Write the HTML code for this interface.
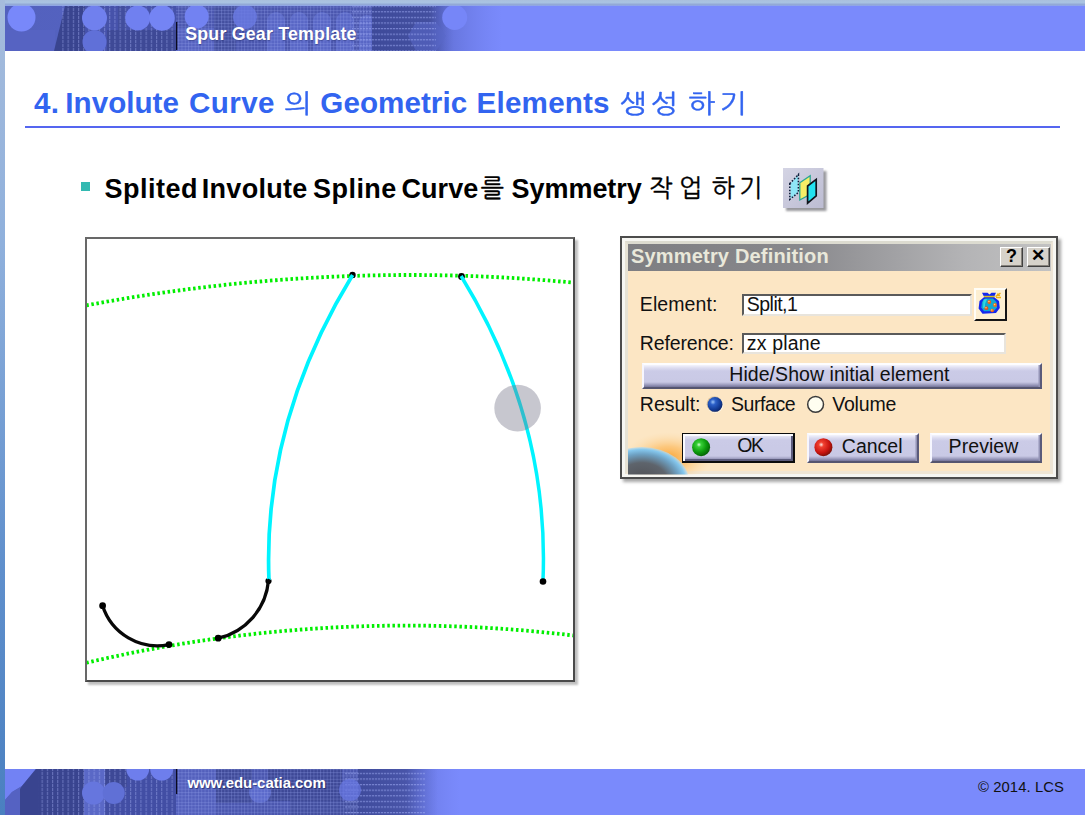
<!DOCTYPE html>
<html lang="ko">
<head>
<meta charset="utf-8">
<title>Spur Gear Template</title>
<style>
*{margin:0;padding:0;box-sizing:border-box}
html,body{width:1085px;height:815px;overflow:hidden;background:#fff}
body{position:relative;font-family:"Liberation Sans","NanumGothic",sans-serif;color:#000}
.abs{position:absolute}
#topstrip{left:0;top:0;width:1085px;height:6px;background:linear-gradient(#a9bfdc 0,#aac4e2 40%,#93a9d6 75%,#8fa4ec 100%)}
#leftstrip{left:0;top:0;width:5px;height:815px;background:linear-gradient(#a6bcdc 0,#8fb0dc 30%,#5f8fcc 70%,#4a80c0 100%)}
#hdrtxt{text-shadow:0.5px 0.5px 1px rgba(10,15,70,0.35);left:185.2px;top:23.5px;font-weight:bold;font-size:17.8px;letter-spacing:0.21px;line-height:20px;color:#fff;white-space:nowrap}
#ftrtxt{text-shadow:1px 1px 1px rgba(10,15,70,0.55);left:187.4px;top:772.9px;font-weight:bold;font-size:15px;letter-spacing:-0.07px;line-height:20px;color:#fff;white-space:nowrap}
#copy{left:978px;top:776.5px;font-size:14.8px;letter-spacing:0.1px;line-height:20px;color:#111;white-space:nowrap}
.tw{top:83.2px;font-weight:bold;font-size:29.6px;line-height:40px;color:#3264f0;white-space:nowrap}
.tw.k{top:84px;font-weight:normal;font-size:29px;transform:scaleY(0.9);-webkit-text-stroke:0.45px #3264f0}
#rule{left:25px;top:126px;width:1035px;height:2px;background:#5566f0}
#bul{left:81px;top:182px;width:9px;height:9px;background:#33b9b1}
.bw{top:168.6px;font-weight:bold;font-size:27px;line-height:40px;white-space:nowrap}
.bw.k{top:167.8px;margin-left:-0.5px;font-weight:normal;font-size:25px;-webkit-text-stroke:0.35px #000}
#box{left:85px;top:237px;width:490px;height:445px;border:2px solid #5a5a5a;border-top-color:#686868;border-left-color:#686868;border-right-color:#4a4a4a;border-bottom-color:#4a4a4a;background:#fff;box-shadow:2.5px 2.5px 2px rgba(0,0,0,0.25)}

#dlg{left:620px;top:236px;width:438px;height:242.5px;background:#fce6c4;border:2px solid #4c4c4c;box-shadow:3px 3px 3px rgba(0,0,0,0.35);font-size:19.5px;line-height:24px;color:#111}
#dlg .fr1{position:absolute;left:0;top:0;right:0;bottom:0;border:3px solid #f6f6f2}
#dlg .fr2{position:absolute;left:3px;top:3px;right:3px;bottom:3px;border:3px solid #dcdbd0;border-bottom-color:#f0e6d4;border-left-color:#e6e2d4;border-right-color:#ece4d6}
#tbar{left:6px;top:6px;width:423px;height:26.5px;background:linear-gradient(90deg,#7e7e82 0,#88888c 40%,#b4b4b6 80%,#c2c2c2 100%)}
#ttl{left:9px;top:6.2px;font-weight:bold;font-size:20px;line-height:24px;color:#e9e8da;white-space:nowrap;letter-spacing:0.18px}
.tbtn{top:8.7px;width:23.5px;height:20px;background:#d6d2ca;border:1.5px solid;border-color:#fff #404040 #404040 #fff;box-shadow:inset -1px -1px 0 #86827c}
.tbtn span{position:absolute;left:0;right:0;top:-2px;text-align:center;font-weight:bold;font-size:18px;line-height:20px;color:#000}
.lbl{white-space:nowrap}
.fld{background:#fff;border:2px solid;border-color:#5a5a5a #e8e4dc #e8e4dc #5a5a5a;height:21.5px}
.fld span{position:absolute;left:2.8px;top:-4px;white-space:nowrap}
.cbtn{background:linear-gradient(180deg,#f4f4fc 0,#dcdcf0 3px,#cbcbe7 6px,#c9c9e5 calc(100% - 5px),#a9a9c9 calc(100% - 3px),#74749a 100%);border:2px solid;border-color:#fdfdff #5a5a7a #55556f #f6f6ff;box-shadow:inset -1.5px 0 0 #9494b6}
.cbtn span{position:absolute;white-space:nowrap}
</style>
</head>
<body>
<svg class="abs" id="hsvg" style="left:0;top:0" width="1085" height="52" viewBox="0 0 1085 52">
<defs>
<linearGradient id="hfade" x1="0" y1="0" x2="1" y2="0">
<stop offset="0" stop-color="#5361be" stop-opacity="1"/><stop offset="0.85" stop-color="#5866c6" stop-opacity="1"/><stop offset="1" stop-color="#6a79e4" stop-opacity="0"/>
</linearGradient>
<linearGradient id="hfade2" x1="0" y1="0" x2="1" y2="0">
<stop offset="0" stop-color="#3e4a9a" stop-opacity="1"/><stop offset="0.7" stop-color="#434f9f" stop-opacity="1"/><stop offset="1" stop-color="#5a68c8" stop-opacity="0"/>
</linearGradient>
<pattern id="vdots" width="5.2" height="4" patternUnits="userSpaceOnUse"><rect x="0" y="0" width="1.1" height="3.2" fill="#a4b0f4" opacity="0.42"/></pattern>
<pattern id="hdash" width="3" height="5.6" patternUnits="userSpaceOnUse"><rect x="0" y="0" width="2.2" height="1.2" fill="#a0acf6" opacity="0.55"/></pattern>
<pattern id="grid" width="3.3" height="3.3" patternUnits="userSpaceOnUse"><rect x="0" y="0" width="3.3" height="0.9" fill="#96a2ee" opacity="0.3"/><rect x="0" y="0" width="0.9" height="3.3" fill="#96a2ee" opacity="0.3"/></pattern>
<clipPath id="hclip"><rect x="5" y="6" width="1080" height="45"/></clipPath>
</defs>
<rect x="5" y="6" width="1080" height="45" fill="#7a8afc"/>
<g clip-path="url(#hclip)">
<rect x="5" y="6" width="497" height="45" fill="url(#hfade)"/>
<rect x="5" y="30" width="50" height="21" fill="#5663c2"/>
<polygon points="65,6 85,6 85,51 54,51" fill="#39448f"/>
<rect x="85" y="6" width="91" height="45" fill="#4652aa"/>
<rect x="107" y="30" width="69" height="21" fill="#3e4996"/>
<rect x="118" y="6" width="8" height="24" fill="#424e9e"/>
<rect x="62" y="6" width="114" height="45" fill="url(#vdots)"/>
<rect x="176" y="6" width="200" height="45" fill="#4a56ae"/>
<rect x="176" y="28" width="40" height="23" fill="#5663c0"/>
<rect x="214" y="6" width="22" height="45" fill="#434f9f"/>
<g fill="#6474d8" opacity="0.55">
<path d="M267,51 V21 a9,9 0 0 1 18,0 V51 Z"/><path d="M290,51 V21 a9,9 0 0 1 18,0 V51 Z"/><path d="M313,51 V21 a9,9 0 0 1 18,0 V51 Z"/><path d="M336,51 V21 a9,9 0 0 1 18,0 V51 Z"/><path d="M359,51 V23 a8,8 0 0 1 16,0 V51 Z"/>
</g>
<rect x="176" y="6" width="200" height="45" fill="url(#grid)"/>
<rect x="372" y="6" width="82" height="45" fill="url(#hfade2)"/>
<polygon points="408,36 416,22 436,22 446,36 436,51 416,51" fill="#5a68c8" opacity="0.55"/>
<rect x="352" y="6" width="84" height="45" fill="url(#hdash)"/>
<circle cx="21.5" cy="17.5" r="14" fill="#7888fa"/>
<circle cx="94.5" cy="18" r="12.5" fill="#7080ee"/>
<circle cx="94.5" cy="42" r="12" fill="#6070d8"/>
<circle cx="137.7" cy="18" r="12.5" fill="#7080f0"/>
<circle cx="162" cy="18" r="12.8" fill="#7484f4"/>
<circle cx="196.7" cy="16.5" r="12" fill="#7282f2"/>
<circle cx="245" cy="17" r="12" fill="#6a7ae4" opacity="0.8"/>
<circle cx="454.7" cy="17.5" r="12.5" fill="#7686f8"/>
</g>
<rect x="176" y="22" width="1.3" height="28" fill="#0a0a20"/>
</svg>
<svg class="abs" id="fsvg" style="left:0;top:768px" width="1085" height="47" viewBox="0 768 1085 47">
<defs>
<linearGradient id="ffade" x1="0" y1="0" x2="1" y2="0">
<stop offset="0" stop-color="#5563c2" stop-opacity="1"/><stop offset="0.84" stop-color="#5563c2" stop-opacity="1"/><stop offset="1" stop-color="#6a79e4" stop-opacity="0"/>
</linearGradient>
<linearGradient id="ffade2" x1="0" y1="0" x2="1" y2="0">
<stop offset="0" stop-color="#3f4b9c" stop-opacity="1"/><stop offset="0.6" stop-color="#4652a4" stop-opacity="0.9"/><stop offset="1" stop-color="#5a68c8" stop-opacity="0"/>
</linearGradient>
<clipPath id="fclip"><rect x="5" y="769" width="1080" height="46"/></clipPath>
</defs>
<rect x="5" y="769" width="1080" height="46" fill="#7a8afc"/>
<g clip-path="url(#fclip)">
<rect x="5" y="769" width="455" height="46" fill="url(#ffade)"/>
<polygon points="5,769 36,769 22,786 12,792 5,800" fill="#7282f4"/>
<polygon points="5,800 12,792 22,786 36,769 40,769 40,815 5,815" fill="#5562c2"/>
<polygon points="36,769 86,769 86,815 20,815 20,789 22,786" fill="#39448f"/>
<rect x="86" y="769" width="90" height="46" fill="#424ea4"/>
<rect x="84" y="769" width="21" height="46" fill="#5a68c6"/>
<rect x="105" y="769" width="22" height="18" fill="#3d4896"/>
<rect x="38" y="769" width="138" height="46" fill="url(#vdots)"/>
<rect x="176" y="769" width="190" height="46" fill="#4a56ae"/>
<rect x="176" y="769" width="40" height="46" fill="#5360bc"/>
<rect x="216" y="769" width="36" height="34" fill="#3f4a98"/>
<rect x="268" y="769" width="74" height="32" fill="#3d4896"/>
<rect x="290" y="801" width="70" height="14" fill="#424e9e"/>
<circle cx="260" cy="792" r="11" fill="#5f6fd2" opacity="0.8"/>
<rect x="176" y="769" width="190" height="46" fill="url(#grid)"/>
<rect x="358" y="769" width="80" height="46" fill="url(#ffade2)"/>
<rect x="345" y="769" width="80" height="46" fill="url(#hdash)"/>
<circle cx="93.5" cy="793" r="11.5" fill="#6676de"/>
<circle cx="113.7" cy="793" r="11" fill="#6070d6"/>
<circle cx="137.7" cy="769" r="11.5" fill="#6e7eec"/>
<circle cx="161.7" cy="769" r="11.5" fill="#6e7eec"/>
<circle cx="350" cy="790" r="11" fill="#6878e2" opacity="0.7"/>
</g>
<rect x="176" y="769" width="1.3" height="25" fill="#0a0a20"/>
</svg>
<div class="abs" id="topstrip"></div>
<div class="abs" id="leftstrip"></div>
<div class="abs" id="hdrtxt">Spur Gear Template</div>
<div class="abs" id="ftrtxt">www.edu-catia.com</div>
<div class="abs" id="copy">© 2014. LCS</div>
<span class="abs tw b" id="tw0" style="left:34.1px;letter-spacing:0.20px">4.</span>
<span class="abs tw b" id="tw1" style="left:65.3px;letter-spacing:0.03px">Involute</span>
<span class="abs tw b" id="tw2" style="left:189.0px;letter-spacing:0.42px">Curve</span>
<span class="abs tw k" id="tw3" style="left:284.3px">의</span>
<span class="abs tw b" id="tw4" style="left:320.3px;letter-spacing:0.06px">Geometric</span>
<span class="abs tw b" id="tw5" style="left:476.6px;letter-spacing:0.20px">Elements</span>
<span class="abs tw k" id="tw6" style="left:619.6px">생</span>
<span class="abs tw k" id="tw7" style="left:650.8px">성</span>
<span class="abs tw k" id="tw8" style="left:688.0px">하</span>
<span class="abs tw k" id="tw9" style="left:719.5px">기</span>
<div class="abs" id="rule"></div>
<div class="abs" id="bul"></div>
<span class="abs bw b" id="bw0" style="left:104.6px;letter-spacing:0.48px">Splited</span>
<span class="abs bw b" id="bw1" style="left:201.7px;letter-spacing:0.31px">Involute</span>
<span class="abs bw b" id="bw2" style="left:313.0px;letter-spacing:0.46px">Spline</span>
<span class="abs bw b" id="bw3" style="left:401.4px;letter-spacing:0.10px">Curve</span>
<span class="abs bw k" id="bw4" style="left:481.1px">를</span>
<span class="abs bw b" id="bw5" style="left:511.6px;letter-spacing:-0.06px">Symmetry</span>
<span class="abs bw k" id="bw6" style="left:649.8px">작</span>
<span class="abs bw k" id="bw7" style="left:679.5px">업</span>
<span class="abs bw k" id="bw8" style="left:712.0px">하</span>
<span class="abs bw k" id="bw9" style="left:739.5px">기</span>
<div class="abs" id="box"></div>
<svg class="abs" id="draw" style="left:87px;top:239px" width="486" height="441" viewBox="87 239 486 441">
<path d="M86.3,305.4 A1740.0,1740.0 0 0 1 576.0,282.9" fill="none" stroke="#00ee00" stroke-width="3.8" stroke-dasharray="2.5 2.65" stroke-dashoffset="0"/>
<path d="M86.3,662.8 A1400.0,1400.0 0 0 1 576.0,635.8" fill="none" stroke="#00ee00" stroke-width="3.8" stroke-dasharray="2.5 2.65" stroke-dashoffset="0"/>
<circle cx="352.5" cy="275" r="3.2" fill="#000"/>
<circle cx="461.5" cy="276.5" r="3.4" fill="#000"/>
<circle cx="268.5" cy="581" r="3.1" fill="#000"/>
<path d="M352.60,275.00 C290.42,376.67 264.99,478.33 268.96,580.00" fill="none" stroke="#00f4ff" stroke-width="3.7"/>
<path d="M461.07,276.00 C523.55,377.67 547.28,479.33 542.97,581.00" fill="none" stroke="#00f4ff" stroke-width="3.5"/>
<path d="M268.5,580.5 A64.9,64.9 0 0 1 218.2,638.2" fill="none" stroke="#080808" stroke-width="3.3" stroke-linecap="round"/>
<path d="M102.6,605.7 A57.7,57.7 0 0 0 169,644.6" fill="none" stroke="#080808" stroke-width="3.3" stroke-linecap="round"/>
<circle cx="102.6" cy="605.7" r="3.4" fill="#000"/>
<circle cx="169" cy="644.6" r="3.4" fill="#000"/>
<circle cx="218.2" cy="638.2" r="3.4" fill="#000"/>
<circle cx="543" cy="581.5" r="3.3" fill="#000"/>
<circle cx="517.6" cy="408.1" r="23.3" fill="#737387" fill-opacity="0.4"/>
</svg>
<div class="abs" id="dlg">
<div class="fr1"></div><div class="fr2"></div>
<svg class="abs" id="dsvg" style="left:0;top:0" width="434" height="238.5" viewBox="622 238 434 238.5">
<defs>
<radialGradient id="gball" cx="0.38" cy="0.36" r="0.7"><stop offset="0" stop-color="#d8ffd8"/><stop offset="0.18" stop-color="#38d038"/><stop offset="0.6" stop-color="#0c9a0c"/><stop offset="1" stop-color="#045a04"/></radialGradient>
<radialGradient id="rball" cx="0.38" cy="0.36" r="0.7"><stop offset="0" stop-color="#ffe8e0"/><stop offset="0.2" stop-color="#f04030"/><stop offset="0.65" stop-color="#c81410"/><stop offset="1" stop-color="#701008"/></radialGradient>
<radialGradient id="bball" cx="0.36" cy="0.34" r="0.75"><stop offset="0" stop-color="#9cc4f8"/><stop offset="0.25" stop-color="#2c60c8"/><stop offset="0.7" stop-color="#123a94"/><stop offset="1" stop-color="#0a2060"/></radialGradient>
<radialGradient id="glow" cx="0.5" cy="0.5" r="0.5"><stop offset="0" stop-color="#fba02c" stop-opacity="0.95"/><stop offset="0.45" stop-color="#fcb450" stop-opacity="0.6"/><stop offset="1" stop-color="#fcd8a0" stop-opacity="0"/></radialGradient>
<radialGradient id="earth" cx="0.5" cy="0.5" r="0.5"><stop offset="0" stop-color="#4e4e52"/><stop offset="0.55" stop-color="#5e646c"/><stop offset="0.8" stop-color="#6ea2c4"/><stop offset="0.93" stop-color="#86c8ee"/><stop offset="1" stop-color="#b8dcf0" stop-opacity="0.7"/></radialGradient>
<clipPath id="bodyclip"><rect x="628" y="272" width="422" height="202.5"/></clipPath>
</defs>
<g clip-path="url(#bodyclip)">
<ellipse cx="668" cy="458" rx="44" ry="26" fill="url(#glow)"/>
<ellipse cx="642" cy="482" rx="47" ry="35" fill="url(#earth)"/>
</g>
</svg>
<div class="abs" id="tbar"></div>
<div class="abs" id="ttl">Symmetry Definition</div>
<div class="abs tbtn" style="left:378px;width:23px"><span>?</span></div>
<div class="abs tbtn" style="left:404.5px"><span style="font-size:17px">✕</span></div>
<div class="abs lbl" id="l1" style="left:17.8px;top:53.6px;letter-spacing:0.09px">Element:</div>
<div class="abs fld" id="f1" style="left:120px;top:56px;width:230px"><span id="f1t" style="letter-spacing:-0.53px">Split,1</span></div>
<div class="abs" id="ib" style="left:352px;top:50px;width:33px;height:33px;background:#fdefd2;border:2px solid;border-color:#fffdf6 #151515 #151515 #fffdf6"></div>
<div class="abs lbl" id="l2" style="left:17.8px;top:92.8px;letter-spacing:-0.14px">Reference:</div>
<div class="abs fld" id="f2" style="left:120px;top:94.5px;width:264px"><span id="f2t" style="letter-spacing:0.16px">zx plane</span></div>
<div class="abs cbtn" id="hs" style="left:19.5px;top:124.5px;width:400px;height:26px"><span id="hst" style="left:85.8px;top:-2.1px;letter-spacing:0.05px">Hide/Show initial element</span></div>
<div class="abs lbl" id="l3" style="left:17.8px;top:154px">Result:</div>
<div class="abs lbl" id="l4" style="left:108.9px;top:154px;letter-spacing:-0.42px">Surface</div>
<div class="abs lbl" id="l5" style="left:210.2px;top:154px;letter-spacing:-0.18px">Volume</div>
<div class="abs cbtn" id="ok" style="left:60px;top:194.5px;width:113px;height:30.5px;border-color:#0c0c0c;border-width:1.5px 2.5px 2.5px 1.5px;box-shadow:inset 2px 2px 0 #fbfbff,inset -2px -2px 0 #5c5c7c"><span id="okt" style="left:54.3px;top:-0.2px;letter-spacing:-1.5px">OK</span></div>
<div class="abs cbtn" id="cn" style="left:184.5px;top:194.5px;width:112px;height:30.5px"><span id="cnt" style="left:33.3px;top:-0.7px">Cancel</span></div>
<div class="abs cbtn" id="pv" style="left:307.5px;top:194.5px;width:112px;height:30.5px"><span id="pvt" style="left:17.1px;top:-0.7px;letter-spacing:0.07px">Preview</span></div>
<svg class="abs" id="dsvg2" style="left:0;top:0" width="434" height="238.5" viewBox="622 238 434 238.5">
<circle cx="715" cy="404.6" r="8.4" fill="#fff8e8"/>
<circle cx="714.6" cy="404.2" r="8" fill="#b08850" opacity="0.5"/>
<circle cx="715" cy="404.4" r="7.4" fill="url(#bball)"/>
<circle cx="815.6" cy="404.4" r="7.9" fill="#fffef0" stroke="#3a3a3a" stroke-width="1.5"/>
<circle cx="701.1" cy="447.2" r="9" fill="url(#gball)"/>
<circle cx="823.4" cy="447.2" r="9" fill="url(#rball)"/>
<g id="bagicon">
<path d="M982,292.8 L987.5,292.8 L989.5,294.5 L991.5,292.8 L996,292.8 L994,297 L999,301 L999.8,308 L996,313 L982.5,313.8 L978.6,308.5 L979.5,301 L984.2,297 Z" fill="#1428ee"/>
<path d="M985,298.5 L993,298.5 L996.5,302 L997,307.5 L994,311 L984,311.2 L981.3,307.5 L982,302 Z" fill="#12a8d0"/>
<path d="M983.5,299.5 L987,299 L985,304 L985,309 L983,307.5 Z" fill="#30d8e0"/>
<rect x="984" y="295.8" width="10.5" height="1.5" fill="#d8c020"/>
<path d="M995.5,296.5 L1000.5,293 M996,297.5 L1001,297.5 M997,294 L1000,295.5" stroke="#f0b010" stroke-width="1.4" fill="none"/>
<circle cx="989.3" cy="302" r="1.9" fill="#f06018"/><circle cx="988.9" cy="301.5" r="0.8" fill="#ffd070"/>
<circle cx="995" cy="305" r="1.9" fill="#f07018"/><circle cx="994.6" cy="304.5" r="0.8" fill="#ffd070"/>
<circle cx="986.4" cy="308.2" r="1.9" fill="#e85018"/><circle cx="986" cy="307.7" r="0.8" fill="#ffd070"/>
<circle cx="992.2" cy="310.5" r="1.8" fill="#f06018"/><circle cx="991.8" cy="310" r="0.8" fill="#ffd070"/>
</g>
</svg>
</div>
<svg class="abs" id="symicon" style="left:778px;top:163px" width="54" height="54" viewBox="778 163 54 54">
<defs><linearGradient id="icg" x1="0" y1="0" x2="1" y2="1"><stop offset="0" stop-color="#d4d4e4"/><stop offset="1" stop-color="#bcbcd2"/></linearGradient>
<filter id="icsh" x="-20%" y="-20%" width="150%" height="150%"><feGaussianBlur stdDeviation="1.3"/></filter></defs>
<rect x="786" y="171" width="40.5" height="40" fill="#55555c" opacity="0.6" filter="url(#icsh)"/>
<rect x="783" y="168" width="40.5" height="40" fill="url(#icg)"/>
<polygon points="790.5,183.8 798.2,175.2 798.2,192.2 790.5,199" fill="#8fe6f6"/>
<polygon points="789.8,183.6 798.4,174.6 798.4,192.4 789.8,199.4" fill="none" stroke="#10203c" stroke-width="1.6" stroke-dasharray="1.5 1.6"/>
<polygon points="799.8,182.8 810.2,175.8 810.2,194.4 799.8,200" fill="#f6ee66" stroke="#28a694" stroke-width="1.3"/>
<polygon points="807.6,186 816.2,179.4 816.2,195.8 807.6,203.2" fill="#22e2f0" stroke="#10141c" stroke-width="1.7"/>
</svg>
</body>
</html>
